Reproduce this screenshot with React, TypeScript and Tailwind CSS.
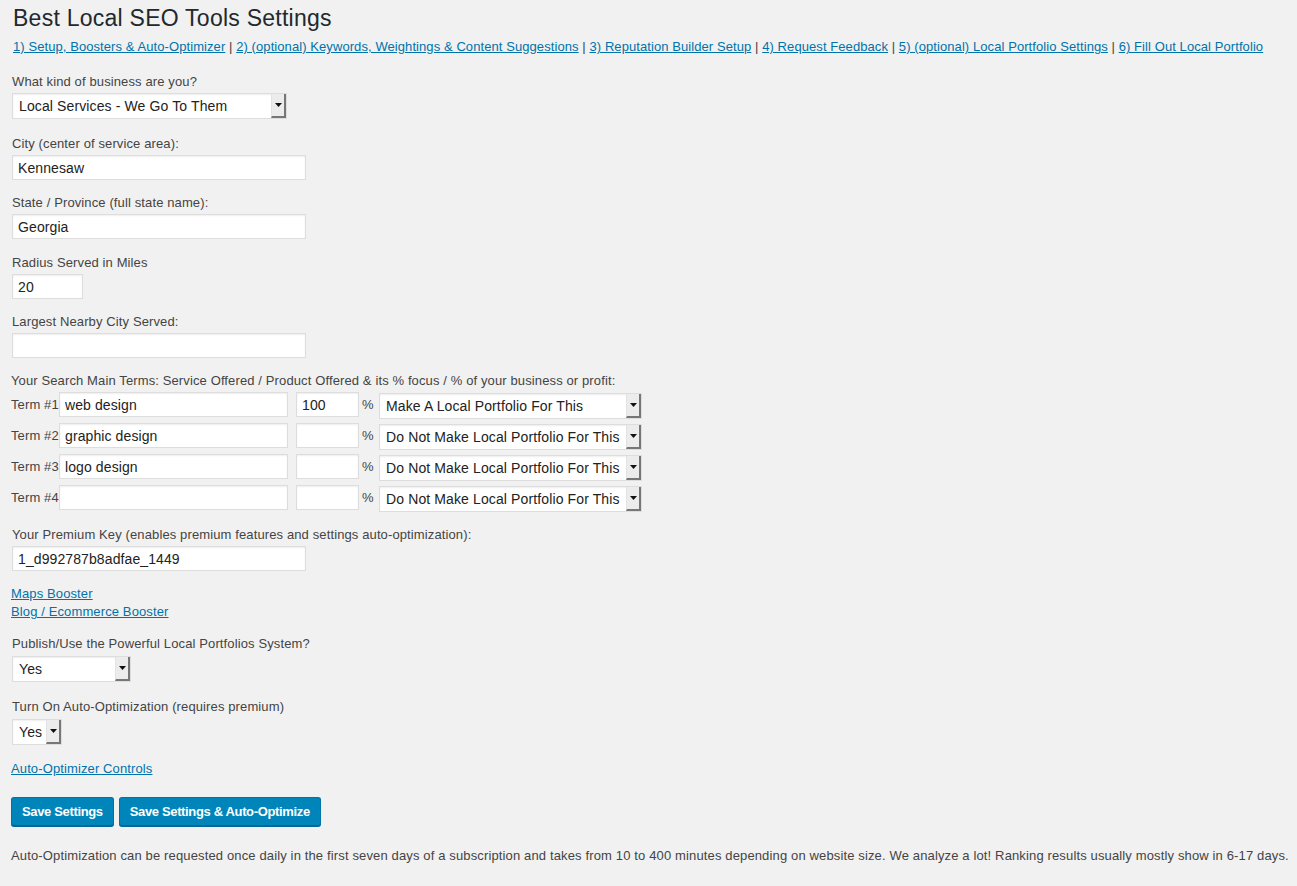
import React from "react";

const font = { fontFamily: '"Liberation Sans", Arial, Helvetica, sans-serif' };

function FakeSelect({ value, width }: { value: string; width: string }) {
    return (
        <div className={`${width} h-[26px] flex bg-white border border-[#dddddd] shadow-[inset_0_1px_2px_rgba(0,0,0,0.07)]`}>
            <div className="flex-1 flex items-center pl-[6px] text-[14px] text-[#222] whitespace-nowrap overflow-hidden">
                {value}
            </div>
            <div className="w-[15px] flex items-center justify-center bg-[#ececec] border-l border-[#e2e2e2] border-r-2 border-b-2 border-r-[#777] border-b-[#777]">
                <svg width="7" height="4" viewBox="0 0 7 4">
                    <path d="M0 0 L7 0 L3.5 4 Z" fill="#111" />
                </svg>
            </div>
        </div>
    );
}

function TextInput({ value, width = "w-[294px]" }: { value?: string; width?: string }) {
    return (
        <input
            readOnly
            value={value ?? ""}
            className={`${width} h-[25px] block bg-white border border-[#dddddd] px-[5px] text-[14px] text-[#222] tracking-[0.1px] shadow-[inset_0_1px_2px_rgba(0,0,0,0.07)] outline-none`}
            style={font}
        />
    );
}

function Field({ label, mb, children }: { label: string; mb: string; children: React.ReactNode }) {
    return (
        <div className={mb}>
            <div className="h-[18px] leading-[18px] mb-[2px]">{label}</div>
            {children}
        </div>
    );
}

const navLinks = [
    "1) Setup, Boosters & Auto-Optimizer",
    "2) (optional) Keywords, Weightings & Content Suggestions",
    "3) Reputation Builder Setup",
    "4) Request Feedback",
    "5) (optional) Local Portfolio Settings",
    "6) Fill Out Local Portfolio",
];

const terms = [
    { n: 1, term: "web design", pct: "100", sel: "Make A Local Portfolio For This" },
    { n: 2, term: "graphic design", pct: "", sel: "Do Not Make Local Portfolio For This" },
    { n: 3, term: "logo design", pct: "", sel: "Do Not Make Local Portfolio For This" },
    { n: 4, term: "", pct: "", sel: "Do Not Make Local Portfolio For This" },
];

export default function App() {
    return (
        <div className="min-h-screen bg-[#f1f1f1] text-[13px] text-[#444] tracking-[0.12px] pl-[12px] pt-[4px]" style={font}>
            <h1 className="text-[23px] leading-[29px] text-[#23282d] pl-[1px] tracking-[0.25px]">Best Local SEO Tools Settings</h1>

            {/* Tabs */}
            <div className="mt-[5px] h-[18px] leading-[18px] pl-[1px] whitespace-nowrap tracking-[0.08px]">
                {navLinks.map((l, i) => (
                    <span key={l}>
                        <a href="#" className="text-[#0073aa] underline">{l}</a>
                        {i < navLinks.length - 1 && " | "}
                    </span>
                ))}
            </div>

            <div className="mt-[17px]">
                <Field label="What kind of business are you?" mb="mb-[16px]">
                    <FakeSelect value="Local Services - We Go To Them" width="w-[275px]" />
                </Field>
                <Field label="City (center of service area):" mb="mb-[14px]">
                    <TextInput value="Kennesaw" />
                </Field>
                <Field label="State / Province (full state name):" mb="mb-[15px]">
                    <TextInput value="Georgia" />
                </Field>
                <Field label="Radius Served in Miles" mb="mb-[14px]">
                    <TextInput value="20" width="w-[71px]" />
                </Field>
                <Field label="Largest Nearby City Served:" mb="mb-[14px]">
                    <TextInput />
                </Field>

                {/* Search terms */}
                <div className="mb-[15px]">
                    <div className="h-[18px] leading-[18px] mb-[2px] -ml-[1px]">
                        Your Search Main Terms: Service Offered / Product Offered &amp; its % focus / % of your business or profit:
                    </div>
                    <div className="flex flex-col gap-[5px]">
                        {terms.map((t) => (
                            <div key={t.n} className="flex items-start h-[26px] -ml-[1px]">
                                <span className="leading-[25px] w-[48px]">Term #{t.n}</span>
                                <TextInput value={t.term} width="w-[229px]" />
                                <div className="w-[8px]" />
                                <TextInput value={t.pct} width="w-[63px]" />
                                <span className="leading-[25px] ml-[3px] w-[17px]">%</span>
                                <div className="mt-[1px]">
                                    <FakeSelect value={t.sel} width="w-[263px]" />
                                </div>
                            </div>
                        ))}
                    </div>
                </div>

                <Field label="Your Premium Key (enables premium features and settings auto-optimization):" mb="mb-[14px]">
                    <TextInput value="1_d992787b8adfae_1449" />
                </Field>

                <div className="flex flex-col items-start -ml-[1px] mb-[14px]">
                    <a href="#" className="text-[#0073aa] underline leading-[18px]">Maps Booster</a>
                    <a href="#" className="text-[#0073aa] underline leading-[18px]">Blog / Ecommerce Booster</a>
                </div>

                <Field label="Publish/Use the Powerful Local Portfolios System?" mb="mb-[16px]">
                    <div className="pt-[1px]">
                        <FakeSelect value="Yes" width="w-[119px]" />
                    </div>
                </Field>
                <Field label="Turn On Auto-Optimization (requires premium)" mb="mb-[15px]">
                    <div className="pt-[1px]">
                        <FakeSelect value="Yes" width="w-[50px]" />
                    </div>
                </Field>

                <div className="leading-[18px] -ml-[1px]">
                    <a href="#" className="text-[#0073aa] underline">Auto-Optimizer Controls</a>
                </div>

                <div className="flex gap-[5px] mt-[19px] -ml-[1px]">
                    <button className="h-[29px] px-[10px] rounded-[3px] bg-[#0085ba] border border-[#0073aa] border-b-[#006799] shadow-[0_1px_0_#006799] text-white text-[13px] font-bold tracking-[-0.35px]">
                        Save Settings
                    </button>
                    <button className="h-[29px] px-[10px] rounded-[3px] bg-[#0085ba] border border-[#0073aa] border-b-[#006799] shadow-[0_1px_0_#006799] text-white text-[13px] font-bold tracking-[-0.35px]">
                        Save Settings &amp; Auto-Optimize
                    </button>
                </div>

                <p className="mt-[21px] leading-[18px] -ml-[1px] whitespace-nowrap tracking-[0.14px]">
                    Auto-Optimization can be requested once daily in the first seven days of a subscription and takes from 10 to 400 minutes depending on website size. We analyze a lot! Ranking results usually mostly show in 6-17 days.
                </p>
            </div>
        </div>
    );
}
